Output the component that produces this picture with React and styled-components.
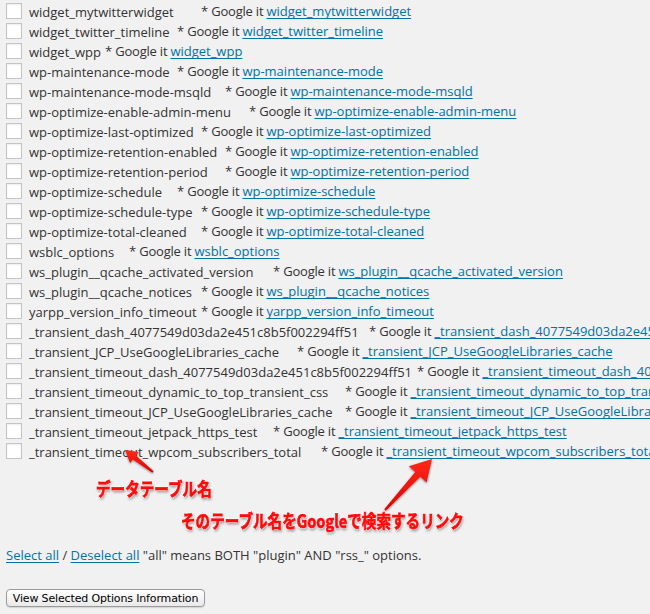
import React from 'react';
import styled, { createGlobalStyle } from 'styled-components';

const options = [
  ['widget_mytwitterwidget', 202],
  ['widget_twitter_timeline', 178],
  ['widget_wpp', 106],
  ['wp-maintenance-mode', 178],
  ['wp-maintenance-mode-msqld', 226],
  ['wp-optimize-enable-admin-menu', 250],
  ['wp-optimize-last-optimized', 202],
  ['wp-optimize-retention-enabled', 226],
  ['wp-optimize-retention-period', 226],
  ['wp-optimize-schedule', 178],
  ['wp-optimize-schedule-type', 202],
  ['wp-optimize-total-cleaned', 202],
  ['wsblc_options', 130],
  ['ws_plugin__qcache_activated_version', 274],
  ['ws_plugin__qcache_notices', 202],
  ['yarpp_version_info_timeout', 202],
  ['_transient_dash_4077549d03da2e451c8b5f002294ff51', 370],
  ['_transient_JCP_UseGoogleLibraries_cache', 298],
  ['_transient_timeout_dash_4077549d03da2e451c8b5f002294ff51', 418],
  ['_transient_timeout_dynamic_to_top_transient_css', 346],
  ['_transient_timeout_JCP_UseGoogleLibraries_cache', 346],
  ['_transient_timeout_jetpack_https_test', 274],
  ['_transient_timeout_wpcom_subscribers_total', 322],
];

// tapered arrow polygon from tail to tip
function arrowPoints(tx, ty, px, py, headLen, headHalf, w0, w1) {
  const dx = px - tx;
  const dy = py - ty;
  const len = Math.sqrt(dx * dx + dy * dy);
  const ux = dx / len;
  const uy = dy / len;
  const nx = -uy;
  const ny = ux;
  const bx = px - ux * headLen;
  const by = py - uy * headLen;
  const pts = [
    [tx + nx * w0, ty + ny * w0],
    [bx + nx * w1, by + ny * w1],
    [bx + nx * headHalf, by + ny * headHalf],
    [px, py],
    [bx - nx * headHalf, by - ny * headHalf],
    [bx - nx * w1, by - ny * w1],
    [tx - nx * w0, ty - ny * w0],
  ];
  return pts.map(p => p[0].toFixed(1) + ',' + p[1].toFixed(1)).join(' ');
}

function App() {
  return (
    <Page>
      <GlobalStyle />

      <OptionList>
        {options.map(([name, tab]) => (
          <OptionRow key={name}>
            <CheckBox />
            <OptionName width={tab - 30}>{name}</OptionName>
            <Google>* Google it</Google>
            <Link href="#">{name}</Link>
          </OptionRow>
        ))}
      </OptionList>

      <SelectLine>
        <Link href="#">Select all</Link> / <Link href="#">Deselect all</Link> "all" means BOTH "plugin" AND "rss_" options.
      </SelectLine>

      <ViewButton>View Selected Options Information</ViewButton>

      <Callouts width="650" height="614" viewBox="0 0 650 614">
        <defs>
          <linearGradient id="redgrad" x1="0" y1="0" x2="0" y2="1">
            <stop offset="0" stopColor="#ff2a1a" />
            <stop offset="1" stopColor="#e00000" />
          </linearGradient>
          <filter id="shade" x="-30%" y="-30%" width="160%" height="160%">
            <feDropShadow dx="0" dy="1" stdDeviation="1.2" floodColor="#000" floodOpacity="0.45" />
          </filter>
        </defs>
        <polygon points={arrowPoints(153, 472, 125, 450, 12, 7, 1, 2.5)} fill="url(#redgrad)" filter="url(#shade)" />
        <polygon points={arrowPoints(385, 510, 432, 459, 21, 12, 1, 3.5)} fill="url(#redgrad)" filter="url(#shade)" />
      </Callouts>

      <Note left={96} top={477}>データテーブル名</Note>
      <Note left={181} top={509}>そのテーブル名をGoogleで検索するリンク</Note>
    </Page>
  );
}

export default App;

const GlobalStyle = createGlobalStyle`
  html, body {
    margin: 0;
    padding: 0;
    background: #f1f1f1;
    overflow: hidden;
  }
`

const Page = styled.div`
  position: relative;
  width: 650px;
  height: 614px;
  overflow: hidden;
  padding-left: 6px;
  box-sizing: border-box;
  font-family: "Open Sans", "Liberation Sans", sans-serif;
  font-size: 13px;
  color: #333;
`

const OptionList = styled.div`
  display: flex;
  flex-direction: column;
  padding-top: 1px;
`

const OptionRow = styled.div`
  display: flex;
  align-items: center;
  height: 20px;
  white-space: nowrap;
`

const CheckBox = styled.span`
  flex: none;
  width: 14px;
  height: 14px;
  margin-right: 7px;
  margin-top: -1px;
  background: #fff;
  border: 1px solid #c4c4c4;
  box-shadow: inset 0 1px 2px rgba(0, 0, 0, 0.07);
`

const OptionName = styled.span`
  flex: none;
  width: ${props => props.width}px;
  padding-top: 2px;
`

const Google = styled.span`
  flex: none;
  letter-spacing: -0.2px;
  margin-right: 3px;
`

const Link = styled.a`
  color: #0074a2;
  text-decoration: underline;
  text-decoration-skip-ink: none;
  text-underline-offset: 2px;
`

const SelectLine = styled.div`
  margin-top: 84px;
  line-height: 20px;
  white-space: nowrap;
`

const ViewButton = styled.button`
  display: block;
  margin-top: 24px;
  width: 199px;
  height: 18px;
  padding: 0;
  font-family: "DejaVu Sans", sans-serif;
  font-size: 11px;
  letter-spacing: -0.15px;
  color: #000;
  background: linear-gradient(#ffffff, #f2f2f2 60%, #e9e9e9);
  border: 1px solid #9a9a9a;
  border-radius: 4px;
  box-shadow: 0 1px 1px rgba(0, 0, 0, 0.12);
`

const Callouts = styled.svg`
  position: absolute;
  left: 0;
  top: 0;
  pointer-events: none;
`

const Note = styled.div`
  position: absolute;
  left: ${props => props.left}px;
  top: ${props => props.top}px;
  font-family: "Noto Sans CJK JP", "Noto Sans", sans-serif;
  font-weight: 700;
  font-size: 18px;
  line-height: 22px;
  white-space: nowrap;
  color: #ff0a0a;
  -webkit-text-stroke: 0.7px #ff0a0a;
  transform: scaleX(0.81);
  transform-origin: left center;
  text-shadow:
    0 0 2px #fff, 0 0 2px #fff, 0 0 2px #fff, 0 0 2px #fff,
    1px 2px 3px rgba(0, 0, 0, 0.5);
`
